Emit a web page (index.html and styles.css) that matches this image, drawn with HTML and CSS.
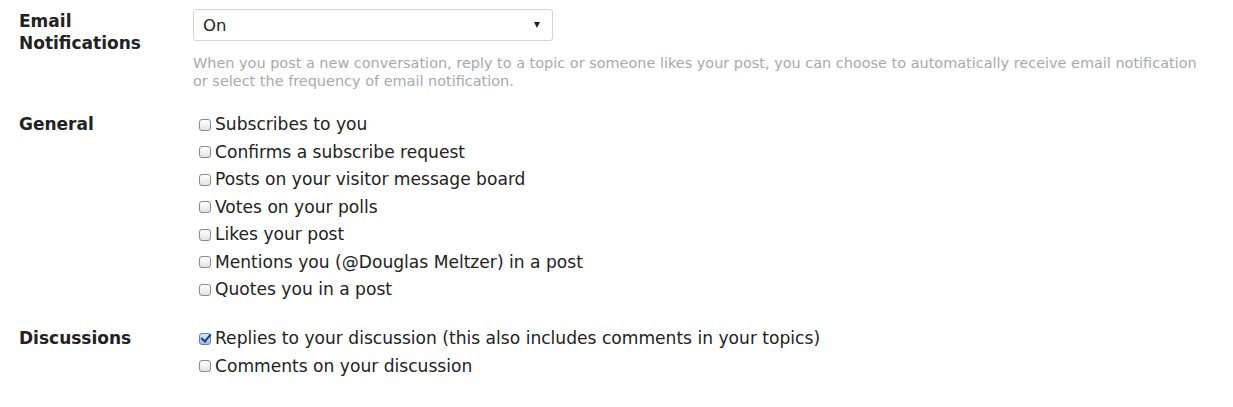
FILE: index.html
```html
<!DOCTYPE html>
<html lang="en">
<head>
    <meta charset="UTF-8">
    <title>Notification settings</title>
    <link rel="stylesheet" href="styles.css">
</head>
<body>
    <div class="row">
        <div class="label">Email<br>Notifications</div>
        <div class="field">
            <div class="select">
                <span>On</span>
                <span class="arrow"></span>
            </div>
            <p class="help">When you post a new conversation, reply to a topic or someone likes your post, you can choose to automatically receive email notification or select the frequency of email notification.</p>
        </div>
    </div>

    <div class="row group">
        <div class="label">General</div>
        <div class="field">
            <label class="check"><input type="checkbox">Subscribes to you</label>
            <label class="check"><input type="checkbox">Confirms a subscribe request</label>
            <label class="check"><input type="checkbox">Posts on your visitor message board</label>
            <label class="check"><input type="checkbox">Votes on your polls</label>
            <label class="check"><input type="checkbox">Likes your post</label>
            <label class="check"><input type="checkbox">Mentions you (@Douglas Meltzer) in a post</label>
            <label class="check"><input type="checkbox">Quotes you in a post</label>
        </div>
    </div>

    <div class="row group last">
        <div class="label">Discussions</div>
        <div class="field">
            <label class="check"><input type="checkbox" checked>Replies to your discussion (this also includes comments in your topics)</label>
            <label class="check"><input type="checkbox">Comments on your discussion</label>
        </div>
    </div>
</body>
</html>
```

FILE: styles.css
```css
body { margin: 0; padding: 9px 19px; font-family: "DejaVu Sans", Verdana, sans-serif; font-size: 17.1px; color: #222; background: #fff; }
.row { display: grid; grid-template-columns: 174px 1fr; }
.label { font-weight: bold; font-size: 17px; line-height: 22px; padding-top: 1px; }
.group { margin-top: 21px; }
.group.last { margin-top: 21.5px; }
.group .label { line-height: 27.5px; padding-top: 0; }

.select { display: flex; align-items: center; justify-content: space-between; width: 360px; height: 32px; padding: 0 12px 0 9px; box-sizing: border-box; border: 1px solid #d4d4d4; border-radius: 3px; font-size: 16.5px; }
.arrow { width: 0; height: 0; border-left: 3px solid transparent; border-right: 3px solid transparent; border-top: 6px solid #222; }

.help { margin: 13px 0 0; font-size: 14.45px; line-height: 18px; color: #a8a9ab; }

.check { display: flex; align-items: center; line-height: 27.5px; padding-left: 6px; }
.check input { appearance: none; width: 12px; height: 12px; margin: 0 4px 0 0; border: 1px solid #8a8a8a; border-radius: 3px; background: linear-gradient(#fff, #e2e2e2); box-sizing: border-box; position: relative; }
.check input:checked { border-color: #5c7fb5; background: linear-gradient(#d8e6fa, #9fbfe8); }
.check input:checked::after { content: ""; position: absolute; left: 3px; top: -2px; width: 4px; height: 8px; border: solid #1f3f73; border-width: 0 2px 2px 0; transform: rotate(40deg); }
```
